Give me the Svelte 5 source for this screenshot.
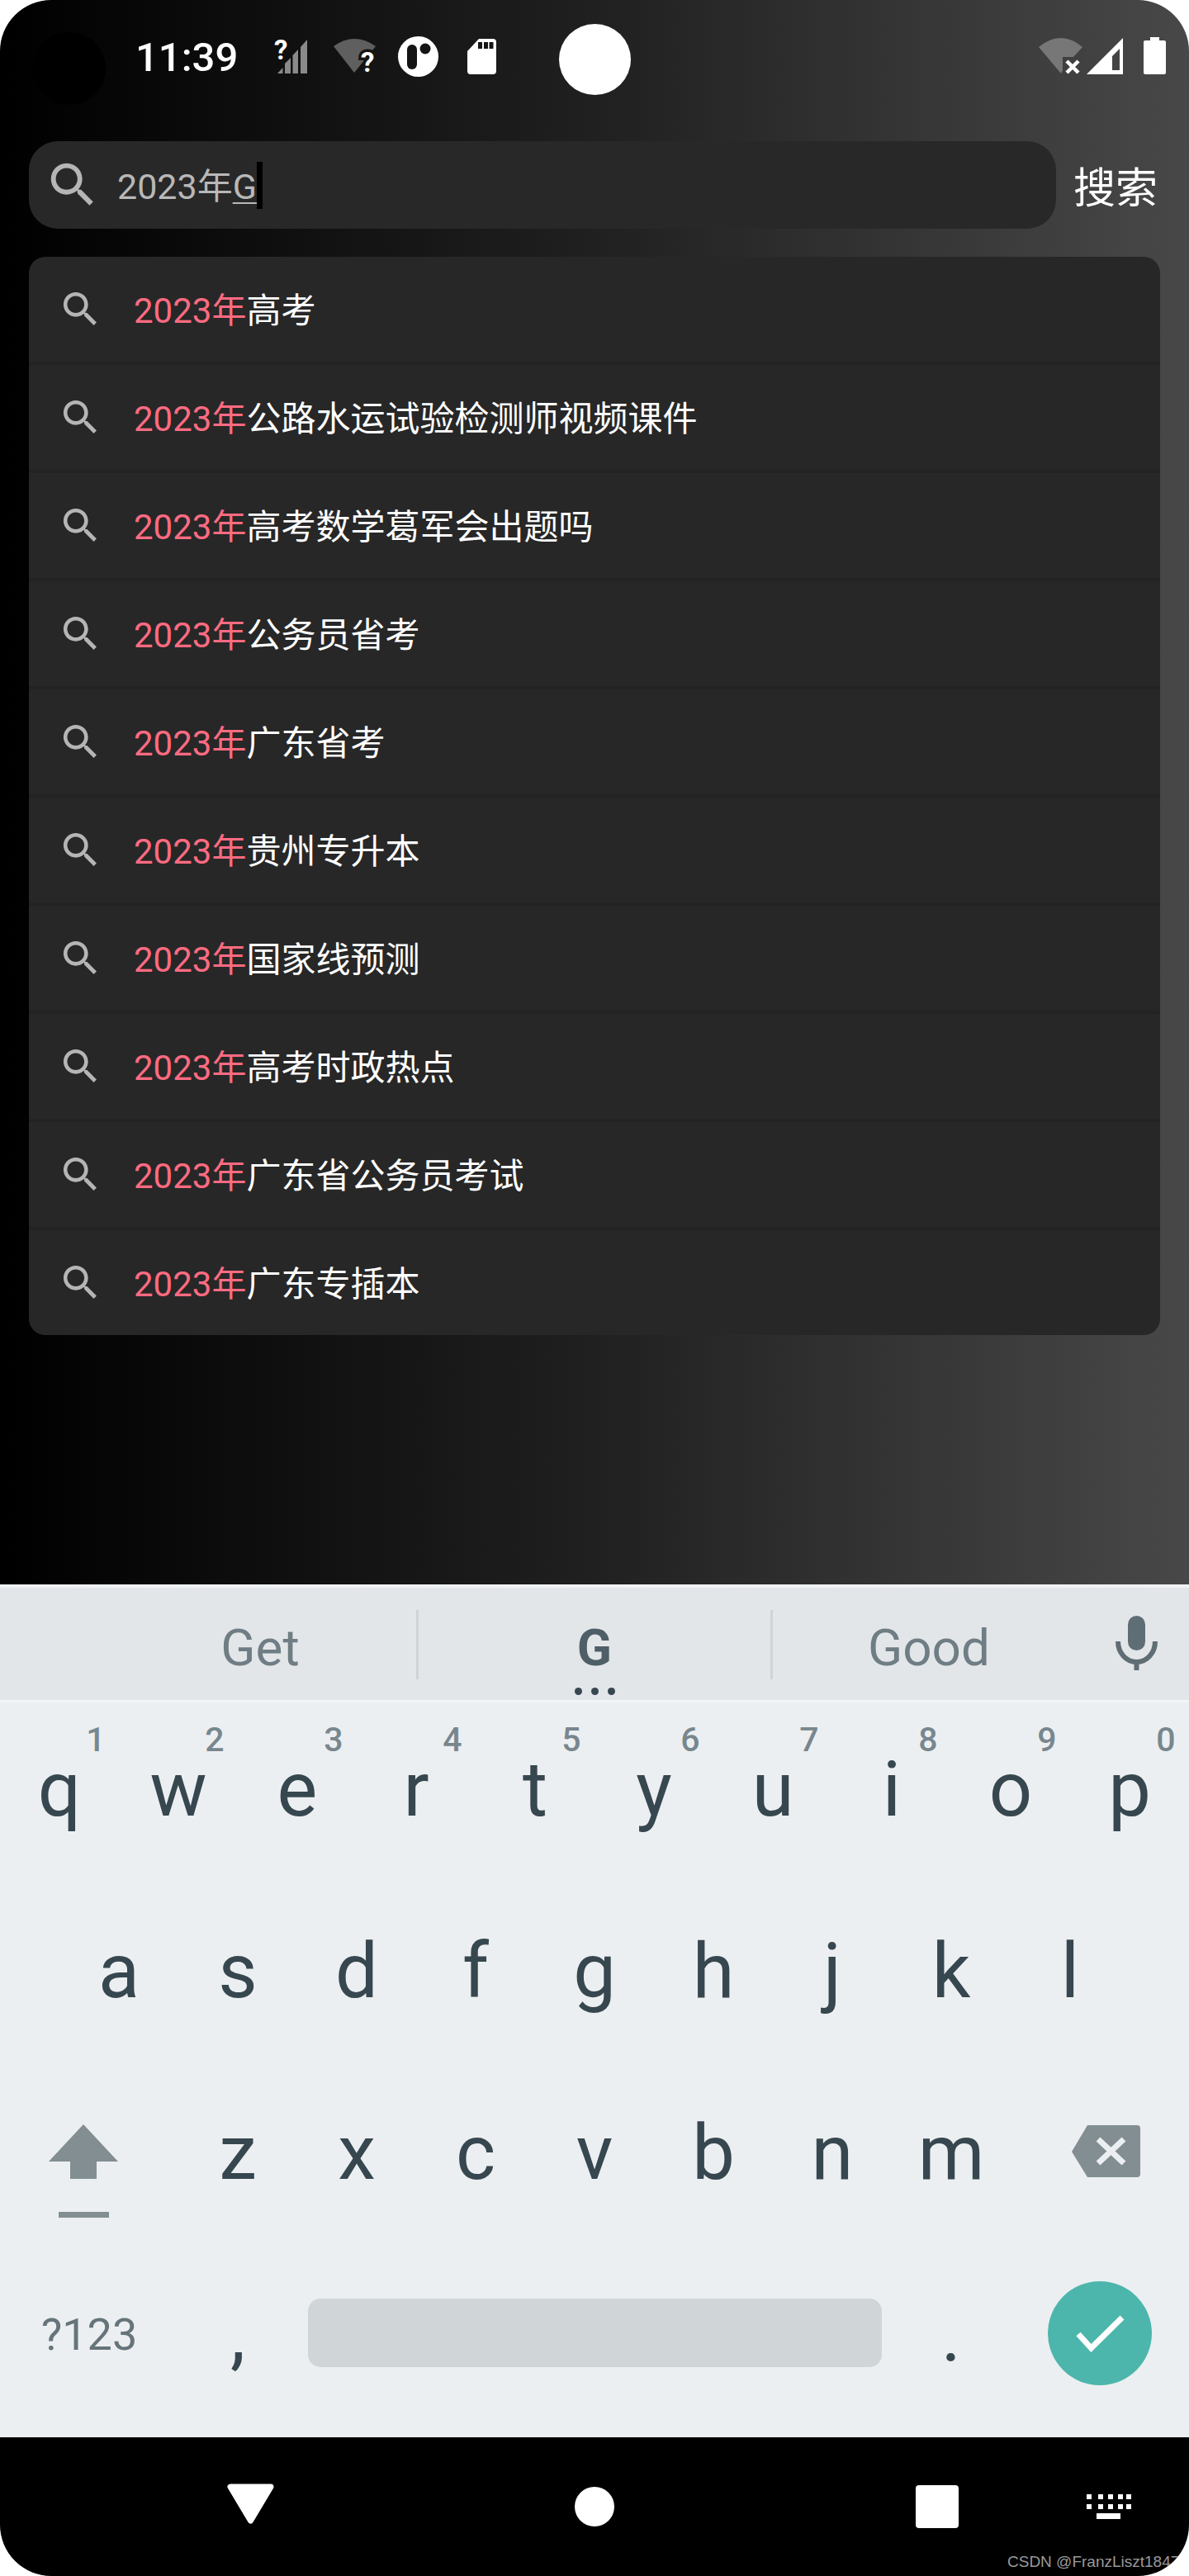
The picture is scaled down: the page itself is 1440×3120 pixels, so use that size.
<script>
  const suggestions = [
    '高考',
    '公路水运试验检测师视频课件',
    '高考数学葛军会出题吗',
    '公务员省考',
    '广东省考',
    '贵州专升本',
    '国家线预测',
    '高考时政热点',
    '广东省公务员考试',
    '广东专插本'
  ];
  const row1 = [['q', '1'], ['w', '2'], ['e', '3'], ['r', '4'], ['t', '5'], ['y', '6'], ['u', '7'], ['i', '8'], ['o', '9'], ['p', '0']];
  const row2 = ['a', 's', 'd', 'f', 'g', 'h', 'j', 'k', 'l'];
  const row3 = ['z', 'x', 'c', 'v', 'b', 'n', 'm'];
  const dots = [0, 14, 26, 38, 48];
  const searchPath = 'M15.5 14h-.79l-.28-.27C15.41 12.59 16 11.11 16 9.5 16 5.91 13.09 3 9.5 3S3 5.91 3 9.5 5.91 16 9.5 16c1.61 0 3.09-.59 4.23-1.57l.27.28v.79l5 4.99L20.49 19l-4.99-5zm-6 0C7.01 14 5 11.99 5 9.5S7.01 5 9.5 5 14 7.01 14 9.5 11.99 14 9.5 14z';
</script>

<div class="phone">
  <div class="screen">
    <div class="status">
      <div class="camera"></div>
      <div class="time">11:39</div>
      <svg class="st" width="70" height="70" viewBox="0 0 70 70">
        <path fill="#8a8a8a" d="M39 22 47 13V54H39ZM29.5 32 36 25V54H29.500ZM20 42 27 35V54H20ZM11 54 17.5 47V54Z" />
        <text x="7" y="37" class="q">?</text>
      </svg>
      <svg class="st" width="70" height="70" viewBox="70 0 70 70">
        <path fill="#5f5f5f" d="M79 21Q104 3 130 21L104 53Z" />
        <text x="112" y="52" class="q notch">?</text>
      </svg>
      <svg class="st" width="70" height="70" viewBox="140 0 70 70">
        <circle cx="181.5" cy="33.5" r="24.5" fill="#fff" />
        <rect x="168" y="19" width="12" height="30" rx="6" fill="#141414" />
        <circle cx="190" cy="24" r="6.5" fill="#141414" />
      </svg>
      <svg class="st" width="80" height="70" viewBox="210 0 80 70">
        <path fill="#fff" d="M255 12H272Q276 12 276 16V51Q276 55 272 55H245Q241 55 241 51V27Z" />
        <path fill="#141414" d="M254 16H259V24H254ZM261 16H266V24H261ZM267.5 16H272.5V24H267.5Z" />
      </svg>
      <div class="dot"></div>
      <div class="st-right">
        <svg width="62" height="70" viewBox="0 0 62 70">
          <path fill="#777" d="M8 22Q35 0 61 22L50 34H37V50L35 54Z" />
          <path stroke="#fff" stroke-width="4.5" d="M42 39 56 53M56 39 42 53" />
        </svg>
        <svg width="63" height="70" viewBox="62 0 63 70">
          <path fill="#fff" fill-rule="evenodd" d="M66 55 110 11V55ZM97 33V50H106V24Z" />
        </svg>
        <svg width="45" height="70" viewBox="125 0 45 70">
          <path fill="#fff" d="M143 10H154V14H160Q162 14 162 16V53Q162 55 160 55H137Q135 55 135 53V16Q135 14 137 14H143Z" />
        </svg>
      </div>
    </div>

    <div class="search-row">
      <div class="search-box">
        <svg width="70" height="70" viewBox="0 0 24 24"><path fill="#b5b5b5" d={searchPath} /></svg>
        <div class="query">2023年<span class="compose">G</span></div>
        <div class="caret"></div>
      </div>
      <div class="search-btn">搜索</div>
    </div>

    <div class="list">
      {#each suggestions as s}
        <div class="item">
          <svg width="55" height="55" viewBox="0 0 24 24"><path fill="#b5b5b5" d={searchPath} /></svg>
          <div class="item-text"><span class="hit">2023年</span>{s}</div>
        </div>
      {/each}
    </div>
  </div>

  <div class="keyboard">
    <div class="strip">
      <div class="cand">Get</div>
      <div class="sep"></div>
      <div class="cand main">G<div class="more"><i></i><i></i><i></i></div></div>
      <div class="sep"></div>
      <div class="cand">Good</div>
      <svg class="mic" width="126" height="136" viewBox="0 0 126 136">
        <rect x="52" y="34" width="21" height="42" rx="10.5" fill="#5f6d75" />
        <path fill="none" stroke="#5f6d75" stroke-width="6" d="M40 65C40 79 50 90 62.500 90S85 79 85 65M62.500 90V100" />
      </svg>
    </div>
    <div class="keys">
      <div class="row">
        {#each row1 as [k, hint]}
          <div class="key">{k}<span class="hint">{hint}</span></div>
        {/each}
      </div>
      <div class="row inset">
        {#each row2 as k}
          <div class="key">{k}</div>
        {/each}
      </div>
      <div class="row">
        <svg class="wide" width="216" height="220" viewBox="0 0 216 220">
          <path fill="#828e92" d="M101 71 143 116H117V137H85V116H59ZM71 177H132V184H71Z" />
        </svg>
        {#each row3 as k}
          <div class="key">{k}</div>
        {/each}
        <svg class="wide" width="216" height="220" viewBox="0 0 216 220">
          <path fill="#828e92" d="M74 104 93 72H153Q157 72 157 76V131Q157 135 153 135H93Z" />
          <path stroke="#eceff1" stroke-width="7" d="M106 89 137 118M137 89 106 118" />
        </svg>
      </div>
      <div class="row">
        <div class="wide sym">?123</div>
        <div class="key">,</div>
        <div class="space-key"><div class="space"></div></div>
        <div class="key">.</div>
        <svg class="wide" width="216" height="220" viewBox="0 0 216 220">
          <circle cx="108" cy="104" r="63" fill="#4db6ac" />
          <path fill="none" stroke="#fff" stroke-width="7" d="M82 105 97.500 122 135 85" />
        </svg>
      </div>
    </div>
  </div>

  <div class="nav">
    <svg class="back" width="57" height="49" viewBox="0 0 57 49">
      <path fill="#fff" stroke="#fff" stroke-width="7" stroke-linejoin="round" d="M4 4H53L28.500 45Z" />
    </svg>
    <div class="home"></div>
    <div class="recent"></div>
    <svg class="kbd" width="54" height="30" viewBox="0 0 54 30">
      {#each dots as x}
        <rect {x} y="0" width="6" height="6" fill="#fff" />
        <rect {x} y="12" width="6" height="6" fill="#fff" />
      {/each}
      <rect x="12" y="23" width="29" height="7" fill="#fff" />
    </svg>
  </div>

  <div class="watermark">CSDN @FranzLiszt1847</div>
</div>

<style>
  :global(body) {
    margin: 0;
    background: #fff;
  }

  .phone {
    width: 1440px;
    height: 3120px;
    position: relative;
    overflow: hidden;
    border-radius: 62px;
    display: flex;
    flex-direction: column;
    font-family: Roboto, "Noto Sans CJK SC", sans-serif;
  }

  .screen {
    height: 1919px;
    flex: none;
    background: linear-gradient(90deg, #000, #202020 50%, #484848);
  }

  .status {
    height: 171px;
    display: flex;
    align-items: flex-start;
    padding: 0 20px 0 39px;
    box-sizing: border-box;
  }
  .camera {
    width: 89px;
    height: 88px;
    margin-top: 39px;
    border-radius: 50%;
    background: #000;
  }
  .time {
    width: 161px;
    margin: 35px 0 0 36px;
    font-size: 49px;
    line-height: 70px;
    font-weight: 500;
    color: #fff;
  }
  .st {
    margin-top: 35px;
  }
  .q {
    font-family: Roboto, sans-serif;
    font-weight: 700;
    font-size: 33px;
    fill: #fff;
  }
  .notch {
    stroke: #141414;
    stroke-width: 7px;
    paint-order: stroke;
  }
  .dot {
    width: 87px;
    height: 86px;
    margin: 29px 0 0 62px;
    border-radius: 50%;
    background: #fff;
  }
  .st-right {
    margin: 35px 0 0 auto;
    display: flex;
  }

  .search-row {
    display: flex;
    align-items: center;
    padding-left: 35px;
  }
  .search-box {
    width: 1244px;
    height: 106px;
    box-sizing: border-box;
    padding-left: 18px;
    display: flex;
    align-items: center;
    border-radius: 35px;
    background: #282828;
  }
  .query {
    margin: 4px 0 0 19px;
    font-size: 43px;
    line-height: 106px;
    color: #b8b8b8;
  }
  .compose {
    text-decoration: underline;
    text-decoration-thickness: 2px;
    text-underline-offset: 4px;
  }
  .caret {
    width: 7px;
    height: 57px;
    background: #000;
  }
  .search-btn {
    margin: -1px 0 0 21px;
    font-size: 51px;
    color: #fff;
  }

  .list {
    width: 1370px;
    margin: 34px 0 0 35px;
    border-radius: 20px;
    overflow: hidden;
    background: #272727;
  }
  .item {
    height: 127px;
    padding-left: 35px;
    display: flex;
    align-items: center;
    border-bottom: 4px solid #232323;
  }
  .item:last-child {
    border-bottom: 0;
  }
  .item-text {
    margin: 4px 0 0 37px;
    font-size: 42px;
    line-height: 60px;
    color: #fff;
  }
  .hit {
    color: #ff6b81;
  }

  .keyboard {
    height: 1033px;
    flex: none;
    background: #eceff1;
    border-top: 4px solid #f0f1f2;
    box-sizing: border-box;
  }
  .strip {
    height: 136px;
    padding-left: 126px;
    display: flex;
    background: #e3e6e9;
  }
  .cand {
    width: 378px;
    padding-top: 5px;
    box-sizing: border-box;
    position: relative;
    text-align: center;
    font-size: 62px;
    line-height: 136px;
    color: #6f7d84;
  }
  .cand.main {
    width: 426px;
    font-weight: 700;
    color: #4f5f67;
  }
  .more {
    position: absolute;
    left: 0;
    right: 0;
    top: 121px;
    display: flex;
    justify-content: center;
    gap: 11px;
  }
  .more i {
    width: 9px;
    height: 9px;
    border-radius: 50%;
    background: #37474f;
  }
  .sep {
    width: 3px;
    height: 84px;
    margin-top: 27px;
    background: #cfd4d7;
  }
  .keys {
    border-top: 3px solid #f2f4f5;
  }
  .row {
    height: 220px;
    display: flex;
    align-items: flex-start;
  }
  .row.inset {
    padding-left: 72px;
  }
  .key {
    width: 144px;
    flex: none;
    position: relative;
    text-align: center;
    font-size: 92px;
    line-height: 212px;
    color: #37474f;
  }
  .hint {
    position: absolute;
    left: 50%;
    top: 25px;
    transform: translateX(calc(-50% + 44px));
    font-size: 41px;
    line-height: 41px;
    font-weight: 500;
    color: #78878e;
  }
  .wide {
    width: 216px;
    flex: none;
  }
  .sym {
    text-align: center;
    font-size: 54px;
    line-height: 211px;
    color: #66747b;
  }
  .space-key {
    width: 720px;
    flex: none;
    padding: 62px 12px 0 13px;
    box-sizing: border-box;
  }
  .space {
    height: 83px;
    border-radius: 15px;
    background: #d0d5d8;
  }

  .nav {
    flex: 1;
    display: flex;
    align-items: flex-start;
    background: #000;
  }
  .back {
    margin: 56px 0 0 275px;
  }
  .home {
    width: 48px;
    height: 48px;
    margin: 60px 0 0 364px;
    border-radius: 50%;
    background: #fff;
  }
  .recent {
    width: 52px;
    height: 52px;
    margin: 58px 0 0 365px;
    border-radius: 4px;
    background: #fff;
  }
  .kbd {
    margin: 69px 0 0 155px;
  }

  .watermark {
    position: absolute;
    left: 1220px;
    top: 3092px;
    font-family: "Liberation Sans", sans-serif;
    font-size: 19px;
    line-height: 22px;
    white-space: nowrap;
    color: #9a9a9a;
  }
</style>
